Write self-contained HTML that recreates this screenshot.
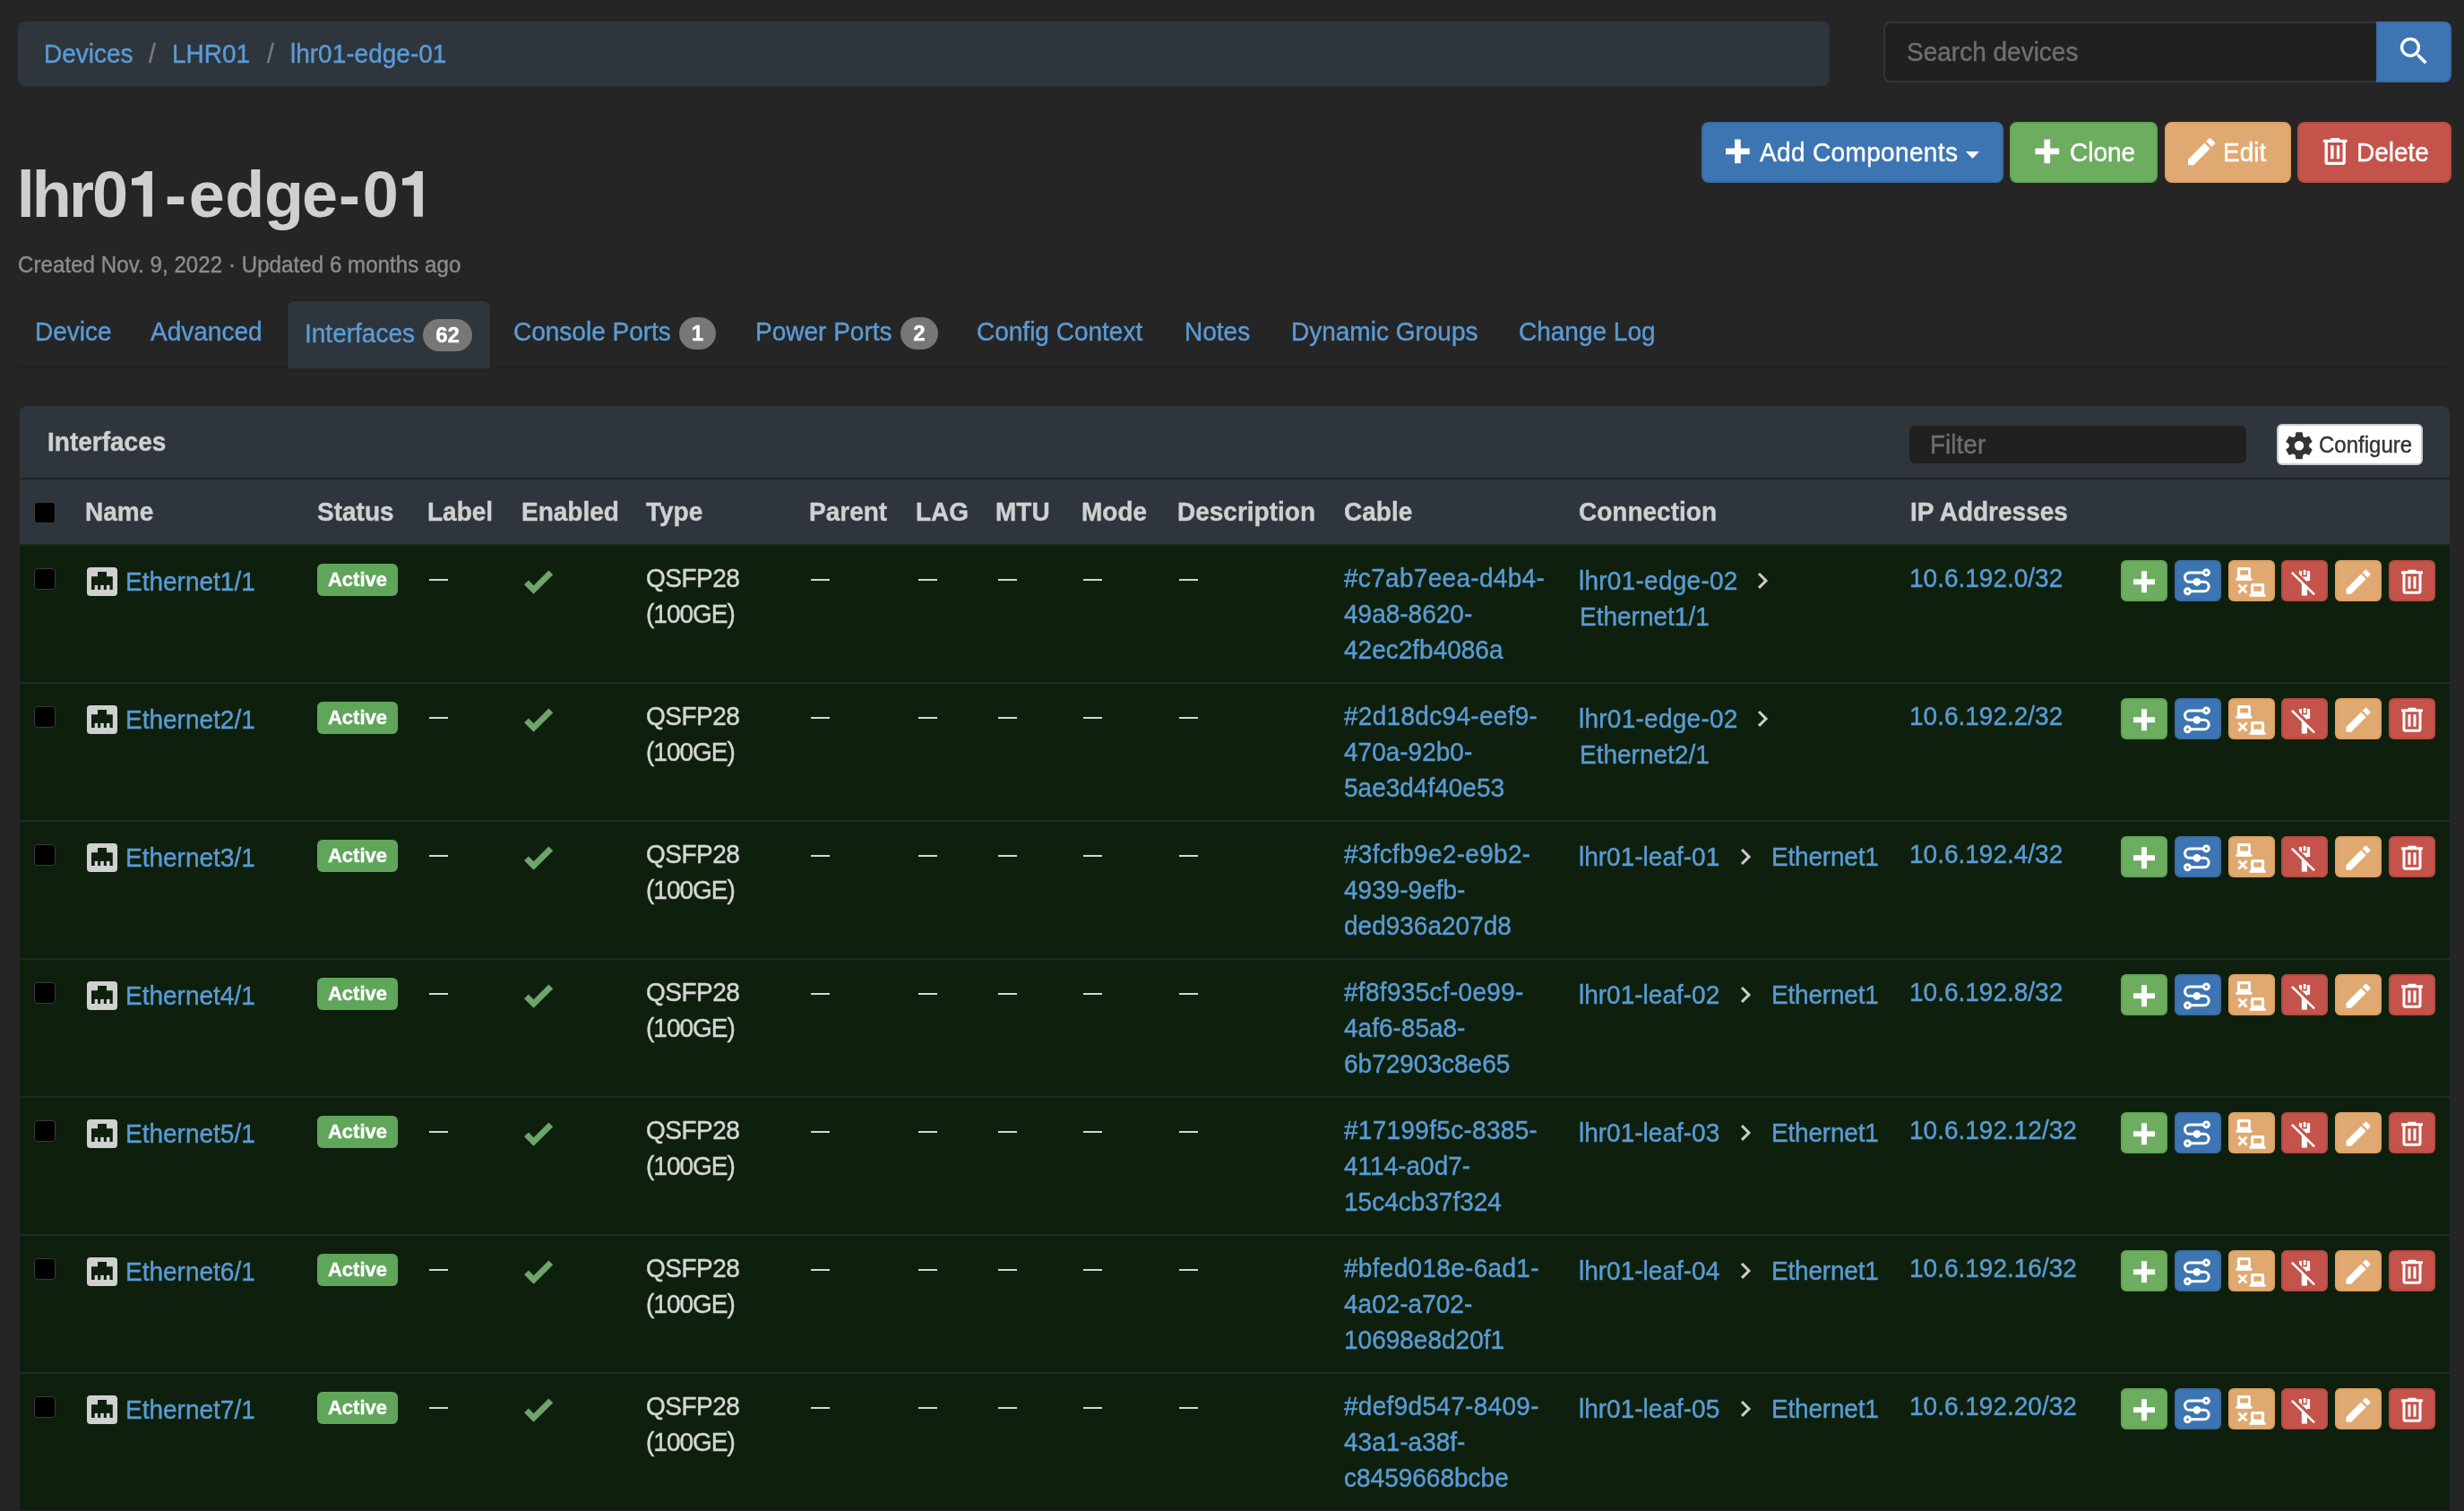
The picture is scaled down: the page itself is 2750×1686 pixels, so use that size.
<!DOCTYPE html>
<html><head><meta charset="utf-8"><style>
html,body{margin:0;padding:0;}
body{width:2750px;height:1686px;overflow:hidden;background:#252525;position:relative;font-family:'Liberation Sans', sans-serif;}
.t{position:absolute;white-space:nowrap;-webkit-text-stroke:0.4px currentColor;}
.r{position:absolute;}
#root{position:absolute;left:0;top:0;width:2750px;height:1686px;will-change:transform;}
</style></head><body><div id="root">
<div class="r" style="left:20px;top:24px;width:2022px;height:72px;background:#2e353d;border-radius:8px;"></div>
<div class="t" style="left:49px;top:41px;font-size:28px;line-height:40px;color:#5b9bd5;transform:scaleY(1.045);transform-origin:0 29px;">Devices</div>
<div class="t" style="left:166px;top:41px;font-size:28px;line-height:40px;color:#7a7a7a;transform:scaleY(1.045);transform-origin:0 29px;">/</div>
<div class="t" style="left:192px;top:41px;font-size:28px;line-height:40px;color:#5b9bd5;transform:scaleY(1.045);transform-origin:0 29px;">LHR01</div>
<div class="t" style="left:298px;top:41px;font-size:28px;line-height:40px;color:#7a7a7a;transform:scaleY(1.045);transform-origin:0 29px;">/</div>
<div class="t" style="left:324px;top:41px;font-size:28px;line-height:40px;color:#5b9bd5;transform:scaleY(1.045);transform-origin:0 29px;">lhr01-edge-01</div>
<div class="r" style="left:2102px;top:24px;width:550px;height:68px;background:#202020;border-radius:8px 0 0 8px;box-sizing:border-box;border:2px solid #353535;border-right:none;"></div>
<div class="t" style="left:2128px;top:39px;font-size:28px;line-height:40px;color:#6f6f6f;transform:scaleY(1.045);transform-origin:0 29px;">Search devices</div>
<div class="r" style="left:2652px;top:24px;width:84px;height:68px;background:#3d75b2;border-radius:0 8px 8px 0;box-sizing:border-box;border:2px solid #3a6ca5;"></div>
<svg class="r" style="left:0;top:0;transform:translate(2673.85px,36.65px)" width="40.8" height="40.8" viewBox="0 0 24 24"><path d="M9.5,3A6.5,6.5 0 0,1 16,9.5C16,11.11 15.41,12.59 14.44,13.73L14.71,14H15.5L20.5,19L19,20.5L14,15.5V14.71L13.73,14.44C12.59,15.41 11.11,16 9.5,16A6.5,6.5 0 0,1 3,9.5A6.5,6.5 0 0,1 9.5,3M9.5,5C7,5 5,7 5,9.5C5,12 7,14 9.5,14C12,14 14,12 14,9.5C14,7 12,5 9.5,5Z" fill="#fff"/></svg>
<div class="r" style="left:1899px;top:136px;width:337px;height:68px;background:#3d75b2;border-radius:8px;box-sizing:border-box;border:2px solid #3a6ca5;"></div>
<svg class="r" style="left:0;top:0;transform:translate(1919.4px,148.8px)" width="40" height="40" viewBox="0 0 24 24"><path d="M20 14H14V20H10V14H4V10H10V4H14V10H20V14Z" fill="#fff"/></svg>
<svg class="r" style="left:1899px;top:136px;" width="337" height="68" viewBox="0 0 337 68"><path d="M295 33h15l-7.5 8z" fill="#fff"/></svg>
<div class="t" style="left:1964px;top:151px;font-size:28px;line-height:40px;color:#fff;letter-spacing:0.35px;transform:scaleY(1.045);transform-origin:0 29px;">Add Components</div>
<div class="r" style="left:2243px;top:136px;width:165px;height:68px;background:#6dad60;border-radius:8px;box-sizing:border-box;border:2px solid #62a653;"></div>
<svg class="r" style="left:0;top:0;transform:translate(2264.8px,148.8px)" width="40" height="40" viewBox="0 0 24 24"><path d="M20 14H14V20H10V14H4V10H10V4H14V10H20V14Z" fill="#fff"/></svg>
<div class="t" style="left:2310px;top:151px;font-size:28px;line-height:40px;color:#fff;transform:scaleY(1.045);transform-origin:0 29px;">Clone</div>
<div class="r" style="left:2416px;top:136px;width:141px;height:68px;background:#e0a971;border-radius:8px;box-sizing:border-box;border:2px solid #e0a160;"></div>
<svg class="r" style="left:0;top:0;transform:translate(2437px,149.2px)" width="40" height="40" viewBox="0 0 24 24"><path d="M20.71,7.04C21.1,6.65 21.1,6 20.71,5.63L18.37,3.29C18,2.9 17.35,2.9 16.96,3.29L15.12,5.12L18.87,8.87M3,17.25V21H6.75L17.81,9.93L14.06,6.18L3,17.25Z" fill="#fff"/></svg>
<div class="t" style="left:2481px;top:151px;font-size:28px;line-height:40px;color:#fff;transform:scaleY(1.045);transform-origin:0 29px;">Edit</div>
<div class="r" style="left:2564px;top:136px;width:172px;height:68px;background:#c4544b;border-radius:8px;box-sizing:border-box;border:2px solid #ba4a42;"></div>
<svg class="r" style="left:0;top:0;transform:translate(2586.2px,149px)" width="40" height="40" viewBox="0 0 24 24"><path d="M9,3V4H4V6H5V19A2,2 0 0,0 7,21H17A2,2 0 0,0 19,19V6H20V4H15V3H9M7,6H17V19H7V6M9,8V17H11V8H9M13,8V17H15V8H13Z" fill="#fff"/></svg>
<div class="t" style="left:2630px;top:151px;font-size:28px;line-height:40px;color:#fff;transform:scaleY(1.045);transform-origin:0 29px;">Delete</div>
<div class="t" style="left:18.8px;top:177px;font-size:72px;line-height:80px;color:#cfcfcf;font-weight:bold;-webkit-text-stroke:0;">l</div>
<div class="t" style="left:35.8px;top:177px;font-size:72px;line-height:80px;color:#cfcfcf;font-weight:bold;-webkit-text-stroke:0;">h</div>
<div class="t" style="left:76.9px;top:177px;font-size:72px;line-height:80px;color:#cfcfcf;font-weight:bold;-webkit-text-stroke:0;">r</div>
<div class="t" style="left:103px;top:177px;font-size:72px;line-height:80px;color:#cfcfcf;font-weight:bold;-webkit-text-stroke:0;">0</div>
<div class="t" style="left:183.9px;top:177px;font-size:72px;line-height:80px;color:#cfcfcf;font-weight:bold;-webkit-text-stroke:0;">-</div>
<div class="t" style="left:210.7px;top:177px;font-size:72px;line-height:80px;color:#cfcfcf;font-weight:bold;-webkit-text-stroke:0;">e</div>
<div class="t" style="left:251.3px;top:177px;font-size:72px;line-height:80px;color:#cfcfcf;font-weight:bold;-webkit-text-stroke:0;">d</div>
<div class="t" style="left:295px;top:177px;font-size:72px;line-height:80px;color:#cfcfcf;font-weight:bold;-webkit-text-stroke:0;">g</div>
<div class="t" style="left:337px;top:177px;font-size:72px;line-height:80px;color:#cfcfcf;font-weight:bold;-webkit-text-stroke:0;">e</div>
<div class="t" style="left:377.9px;top:177px;font-size:72px;line-height:80px;color:#cfcfcf;font-weight:bold;-webkit-text-stroke:0;">-</div>
<div class="t" style="left:404.7px;top:177px;font-size:72px;line-height:80px;color:#cfcfcf;font-weight:bold;-webkit-text-stroke:0;">0</div>
<svg class="r" style="left:0px;top:0" width="500" height="260" viewBox="0 0 500 260"><path d="M147 199C153 198.5 159 196 161.5 190.9H169.9V241.8H159.8V206.8H147Z" fill="#cfcfcf"/></svg>
<svg class="r" style="left:302px;top:0" width="500" height="260" viewBox="0 0 500 260"><path d="M147 199C153 198.5 159 196 161.5 190.9H169.9V241.8H159.8V206.8H147Z" fill="#cfcfcf"/></svg>
<div class="t" style="left:20px;top:276px;font-size:24px;line-height:40px;color:#8c8c8c;letter-spacing:0.09px;transform:scaleY(1.045);transform-origin:0 28px;">Created Nov. 9, 2022 · Updated 6 months ago</div>
<div class="r" style="left:20px;top:409px;width:2714px;height:2px;background:#212121;"></div>
<div class="r" style="left:320px;top:335px;width:228px;height:76px;background:#2e353d;border-radius:8px 8px 0 0;box-sizing:border-box;border:1px solid #212121;border-bottom:none;"></div>
<div class="t" style="left:39px;top:351px;font-size:28px;line-height:40px;color:#5b9bd5;transform:scaleY(1.045);transform-origin:0 29px;">Device</div>
<div class="t" style="left:168px;top:351px;font-size:28px;line-height:40px;color:#5b9bd5;transform:scaleY(1.045);transform-origin:0 29px;">Advanced</div>
<div class="t" style="left:340px;top:353px;font-size:28px;line-height:40px;color:#5b9bd5;transform:scaleY(1.045);transform-origin:0 29px;">Interfaces</div>
<div class="r" style="left:472px;top:356px;width:55px;height:36px;background:#777777;border-radius:18px;"></div>
<div class="t" style="left:472px;top:356px;width:55px;height:36px;line-height:36px;text-align:center;font-size:24px;font-weight:bold;color:#fff">62</div>
<div class="t" style="left:573px;top:351px;font-size:28px;line-height:40px;color:#5b9bd5;transform:scaleY(1.045);transform-origin:0 29px;">Console Ports</div>
<div class="r" style="left:758px;top:354px;width:41px;height:36px;background:#777777;border-radius:18px;"></div>
<div class="t" style="left:758px;top:354px;width:41px;height:36px;line-height:36px;text-align:center;font-size:24px;font-weight:bold;color:#fff">1</div>
<div class="t" style="left:843px;top:351px;font-size:28px;line-height:40px;color:#5b9bd5;transform:scaleY(1.045);transform-origin:0 29px;">Power Ports</div>
<div class="r" style="left:1005px;top:354px;width:42px;height:36px;background:#777777;border-radius:18px;"></div>
<div class="t" style="left:1005px;top:354px;width:42px;height:36px;line-height:36px;text-align:center;font-size:24px;font-weight:bold;color:#fff">2</div>
<div class="t" style="left:1090px;top:351px;font-size:28px;line-height:40px;color:#5b9bd5;transform:scaleY(1.045);transform-origin:0 29px;">Config Context</div>
<div class="t" style="left:1322px;top:351px;font-size:28px;line-height:40px;color:#5b9bd5;transform:scaleY(1.045);transform-origin:0 29px;">Notes</div>
<div class="t" style="left:1441px;top:351px;font-size:28px;line-height:40px;color:#5b9bd5;transform:scaleY(1.045);transform-origin:0 29px;">Dynamic Groups</div>
<div class="t" style="left:1695px;top:351px;font-size:28px;line-height:40px;color:#5b9bd5;transform:scaleY(1.045);transform-origin:0 29px;">Change Log</div>
<div class="r" style="left:22px;top:453px;width:2712px;height:80px;background:#2e353d;border-radius:8px 8px 0 0;"></div>
<div class="r" style="left:22px;top:533px;width:2712px;height:2px;background:#232323;"></div>
<div class="r" style="left:22px;top:535px;width:2712px;height:72px;background:#2e353d;"></div>
<div class="r" style="left:22px;top:607px;width:2712px;height:2px;background:#232323;"></div>
<div class="t" style="left:53px;top:474px;font-size:28px;line-height:40px;color:#d0d0d0;font-weight:bold;transform:scaleY(1.045);transform-origin:0 29px;">Interfaces</div>
<div class="r" style="left:2129px;top:473px;width:380px;height:46px;background:#202020;border-radius:8px;box-sizing:border-box;border:2px solid #353535;"></div>
<div class="t" style="left:2154px;top:477px;font-size:28px;line-height:40px;color:#6f6f6f;transform:scaleY(1.045);transform-origin:0 29px;">Filter</div>
<div class="r" style="left:2541px;top:473px;width:163px;height:46px;background:#fff;border-radius:6px;box-sizing:border-box;border:2px solid #cccccc;"></div>
<svg class="r" style="left:0;top:0;transform:translate(2548px,479.3px)" width="36" height="36" viewBox="0 0 24 24"><path d="M12,15.5A3.5,3.5 0 0,1 8.5,12A3.5,3.5 0 0,1 12,8.5A3.5,3.5 0 0,1 15.5,12A3.5,3.5 0 0,1 12,15.5M19.43,12.97C19.47,12.65 19.5,12.33 19.5,12C19.5,11.67 19.47,11.34 19.43,11L21.54,9.37C21.73,9.22 21.78,8.95 21.66,8.73L19.66,5.27C19.54,5.05 19.27,4.96 19.05,5.05L16.56,6.05C16.04,5.66 15.5,5.32 14.87,5.07L14.5,2.42C14.46,2.18 14.25,2 14,2H10C9.75,2 9.54,2.18 9.5,2.42L9.13,5.07C8.5,5.32 7.96,5.66 7.44,6.05L4.95,5.05C4.73,4.96 4.46,5.05 4.34,5.27L2.34,8.73C2.21,8.95 2.27,9.22 2.46,9.37L4.57,11C4.53,11.34 4.5,11.67 4.5,12C4.5,12.33 4.53,12.65 4.57,12.97L2.46,14.63C2.27,14.78 2.21,15.05 2.34,15.27L4.34,18.73C4.46,18.95 4.73,19.03 4.95,18.95L7.44,17.94C7.96,18.34 8.5,18.68 9.13,18.93L9.5,21.58C9.54,21.82 9.75,22 10,22H14C14.25,22 14.46,21.82 14.5,21.58L14.87,18.93C15.5,18.67 16.04,18.34 16.56,17.94L19.05,18.95C19.27,19.03 19.54,18.95 19.66,18.73L21.66,15.27C21.78,15.05 21.73,14.78 21.54,14.63L19.43,12.97Z" fill="#333"/></svg>
<div class="t" style="left:2588px;top:477px;font-size:24px;line-height:40px;color:#333333;transform:scaleY(1.045);transform-origin:0 28px;">Configure</div>
<div class="r" style="left:38px;top:560px;width:24px;height:24px;background:#000;border-radius:4px;box-sizing:border-box;border:1px solid #3b3b3b;"></div>
<div class="t" style="left:95px;top:552px;font-size:28px;line-height:40px;color:#d0d0d0;font-weight:bold;transform:scaleY(1.045);transform-origin:0 29px;">Name</div>
<div class="t" style="left:354px;top:552px;font-size:28px;line-height:40px;color:#d0d0d0;font-weight:bold;transform:scaleY(1.045);transform-origin:0 29px;">Status</div>
<div class="t" style="left:477px;top:552px;font-size:28px;line-height:40px;color:#d0d0d0;font-weight:bold;transform:scaleY(1.045);transform-origin:0 29px;">Label</div>
<div class="t" style="left:582px;top:552px;font-size:28px;line-height:40px;color:#d0d0d0;font-weight:bold;transform:scaleY(1.045);transform-origin:0 29px;">Enabled</div>
<div class="t" style="left:721px;top:552px;font-size:28px;line-height:40px;color:#d0d0d0;font-weight:bold;transform:scaleY(1.045);transform-origin:0 29px;">Type</div>
<div class="t" style="left:903px;top:552px;font-size:28px;line-height:40px;color:#d0d0d0;font-weight:bold;transform:scaleY(1.045);transform-origin:0 29px;">Parent</div>
<div class="t" style="left:1022px;top:552px;font-size:28px;line-height:40px;color:#d0d0d0;font-weight:bold;transform:scaleY(1.045);transform-origin:0 29px;">LAG</div>
<div class="t" style="left:1111px;top:552px;font-size:28px;line-height:40px;color:#d0d0d0;font-weight:bold;transform:scaleY(1.045);transform-origin:0 29px;">MTU</div>
<div class="t" style="left:1207px;top:552px;font-size:28px;line-height:40px;color:#d0d0d0;font-weight:bold;transform:scaleY(1.045);transform-origin:0 29px;">Mode</div>
<div class="t" style="left:1314px;top:552px;font-size:28px;line-height:40px;color:#d0d0d0;font-weight:bold;transform:scaleY(1.045);transform-origin:0 29px;">Description</div>
<div class="t" style="left:1500px;top:552px;font-size:28px;line-height:40px;color:#d0d0d0;font-weight:bold;transform:scaleY(1.045);transform-origin:0 29px;">Cable</div>
<div class="t" style="left:1762px;top:552px;font-size:28px;line-height:40px;color:#d0d0d0;font-weight:bold;transform:scaleY(1.045);transform-origin:0 29px;">Connection</div>
<div class="t" style="left:2132px;top:552px;font-size:28px;line-height:40px;color:#d0d0d0;font-weight:bold;transform:scaleY(1.045);transform-origin:0 29px;">IP Addresses</div>
<div class="r" style="left:22px;top:609px;width:2712px;height:152px;background:#0e200d;"></div>
<div class="r" style="left:38px;top:634px;width:24px;height:24px;background:#000;border-radius:4px;box-sizing:border-box;border:1px solid #3b3b3b;"></div>
<svg class="r" style="left:97px;top:633px;" width="34" height="32" viewBox="0 0 34 32"><rect x="0" y="0" width="34" height="32" rx="4" fill="#d0d0d0"/><path d="M5 10.2H12V5.1H22V10.2H28.8V25H5Z" fill="#0e200d"/><rect x="8.7" y="19.9" width="3.4" height="5.2" fill="#d0d0d0"/><rect x="15.2" y="19.9" width="3.6" height="5.2" fill="#d0d0d0"/><rect x="21.9" y="19.9" width="3.6" height="5.2" fill="#d0d0d0"/></svg>
<div class="t" style="left:140px;top:630px;font-size:28px;line-height:40px;color:#5b9bd5;transform:scaleY(1.045);transform-origin:0 29px;">Ethernet1/1</div>
<div class="r" style="left:354px;top:629px;width:90px;height:36px;background:#5fa55a;border-radius:6px;"></div>
<div class="t" style="left:354px;top:629px;width:90px;text-align:center;font-size:22px;line-height:36px;font-weight:bold;color:#fff">Active</div>
<div class="r" style="left:479px;top:646px;width:21px;height:2px;background:#d6d6d6;"></div>
<svg class="r" style="left:0;top:0;transform:translate(580.3px,628.1px)" width="40.8" height="40.8" viewBox="0 0 24 24"><path d="M9,20.42L2.79,14.21L5.62,11.38L9,14.77L18.88,4.88L21.71,7.71L9,20.42Z" fill="#6ea56a"/></svg>
<div class="t" style="left:721px;top:626px;font-size:28px;line-height:40px;color:#d6d6d6;letter-spacing:-0.5px;transform:scaleY(1.045);transform-origin:0 29px;">QSFP28</div>
<div class="t" style="left:721px;top:666px;font-size:28px;line-height:40px;color:#d6d6d6;letter-spacing:-1.0px;transform:scaleY(1.045);transform-origin:0 29px;">(100GE)</div>
<div class="r" style="left:905px;top:646px;width:21px;height:2px;background:#d6d6d6;"></div>
<div class="r" style="left:1025px;top:646px;width:21px;height:2px;background:#d6d6d6;"></div>
<div class="r" style="left:1114px;top:646px;width:21px;height:2px;background:#d6d6d6;"></div>
<div class="r" style="left:1209px;top:646px;width:21px;height:2px;background:#d6d6d6;"></div>
<div class="r" style="left:1316px;top:646px;width:21px;height:2px;background:#d6d6d6;"></div>
<div class="t" style="left:1500px;top:626px;font-size:28px;line-height:40px;color:#5b9bd5;letter-spacing:0.3px;transform:scaleY(1.045);transform-origin:0 29px;">#c7ab7eea-d4b4-</div>
<div class="t" style="left:1500px;top:666px;font-size:28px;line-height:40px;color:#5b9bd5;transform:scaleY(1.045);transform-origin:0 29px;">49a8-8620-</div>
<div class="t" style="left:1500px;top:706px;font-size:28px;line-height:40px;color:#5b9bd5;transform:scaleY(1.045);transform-origin:0 29px;">42ec2fb4086a</div>
<div class="t" style="left:1762px;top:629px;font-size:28px;line-height:40px;color:#5b9bd5;letter-spacing:0.25px;transform:scaleY(1.045);transform-origin:0 29px;">lhr01-edge-02</div>
<svg class="r" style="left:0;top:0;transform:translate(1949.1px,630px)" width="36" height="36" viewBox="0 0 24 24"><path d="M8.59,16.58L13.17,12L8.59,7.41L10,6L16,12L10,18L8.59,16.58Z" fill="#cccccc"/></svg>
<div class="t" style="left:1763px;top:669px;font-size:28px;line-height:40px;color:#5b9bd5;transform:scaleY(1.045);transform-origin:0 29px;">Ethernet1/1</div>
<div class="t" style="left:2131px;top:626px;font-size:28px;line-height:40px;color:#5b9bd5;transform:scaleY(1.045);transform-origin:0 29px;">10.6.192.0/32</div>
<div class="r" style="left:2367px;top:625px;width:52px;height:46px;background:#6dad60;border-radius:6px;box-sizing:border-box;border:2px solid #62a653;"></div>
<svg class="r" style="left:2367px;top:625px;" width="52" height="46" viewBox="0 0 52 46"><g transform="translate(8 6.3) scale(1.5)"><path d="M20 14H14V20H10V14H4V10H10V4H14V10H20V14Z" fill="#fff"/></g></svg>
<div class="r" style="left:2427px;top:625px;width:52px;height:46px;background:#3d75b2;border-radius:6px;box-sizing:border-box;border:2px solid #3a6ca5;"></div>
<svg class="r" style="left:2427px;top:625px;" width="52" height="46" viewBox="0 0 52 46"><path d="M32.5 13.95H16.74A5.2 5.2 0 0 0 16.74 24.35H32.98A5.2 5.2 0 0 1 32.98 34.75H17.5" fill="none" stroke="#fff" stroke-width="3"/><circle cx="35.4" cy="13.95" r="2.9" fill="none" stroke="#fff" stroke-width="3.1"/><circle cx="14.46" cy="34.75" r="2.9" fill="none" stroke="#fff" stroke-width="3.1"/><circle cx="24.86" cy="24.35" r="4.3" fill="#fff"/></svg>
<div class="r" style="left:2487px;top:625px;width:52px;height:46px;background:#e0a971;border-radius:6px;box-sizing:border-box;border:2px solid #e0a160;"></div>
<svg class="r" style="left:2487px;top:625px;" width="52" height="46" viewBox="0 0 52 46"><path d="M12 7.9H22.8A2.1 2.1 0 0 1 24.9 10V20H9.9V10A2.1 2.1 0 0 1 12 7.9ZM13.2 11.2V16.5H22.1V11.2Z" fill="#fff" fill-rule="evenodd"/><rect x="8.4" y="20" width="18" height="2.8" fill="#fff"/><path d="M27.2 26H38A2.1 2.1 0 0 1 40.1 28.1V38H25.1V28.1A2.1 2.1 0 0 1 27.2 26ZM28.3 29.2V34.75H37V29.2Z" fill="#fff" fill-rule="evenodd"/><rect x="23.6" y="38" width="18" height="2.8" fill="#fff"/><path d="M11.5 27.5L20.5 36.5M20.5 27.5L11.5 36.5" stroke="#fff" stroke-width="2.8"/></svg>
<div class="r" style="left:2546px;top:625px;width:52px;height:46px;background:#c4544b;border-radius:6px;box-sizing:border-box;border:2px solid #ba4a42;"></div>
<svg class="r" style="left:2546px;top:625px;" width="52" height="46" viewBox="0 0 52 46"><path d="M19.9 11.9H23.1V18.6H28.8V11.9H32.1V23H19.9Z" fill="#fff"/><rect x="24.8" y="11" width="2.7" height="5.6" fill="#fff"/><rect x="22.8" y="22" width="6.1" height="17.6" fill="#fff"/><path d="M5 7.12L45 46.16L48.07 43.01L8.07 3.97Z" fill="#c4544b"/><path d="M11.9 13.85L37.0 38.4" stroke="#fff" stroke-width="2.5"/></svg>
<div class="r" style="left:2606px;top:625px;width:52px;height:46px;background:#e0a971;border-radius:6px;box-sizing:border-box;border:2px solid #e0a160;"></div>
<svg class="r" style="left:2606px;top:625px;" width="52" height="46" viewBox="0 0 52 46"><g transform="translate(8 6.3) scale(1.5)"><path d="M20.71,7.04C21.1,6.65 21.1,6 20.71,5.63L18.37,3.29C18,2.9 17.35,2.9 16.96,3.29L15.12,5.12L18.87,8.87M3,17.25V21H6.75L17.81,9.93L14.06,6.18L3,17.25Z" fill="#fff"/></g></svg>
<div class="r" style="left:2666px;top:625px;width:52px;height:46px;background:#c4544b;border-radius:6px;box-sizing:border-box;border:2px solid #ba4a42;"></div>
<svg class="r" style="left:2666px;top:625px;" width="52" height="46" viewBox="0 0 52 46"><g transform="translate(8 6.3) scale(1.5)"><path d="M9,3V4H4V6H5V19A2,2 0 0,0 7,21H17A2,2 0 0,0 19,19V6H20V4H15V3H9M7,6H17V19H7V6M9,8V17H11V8H9M13,8V17H15V8H13Z" fill="#fff"/></g></svg>
<div class="r" style="left:22px;top:761px;width:2712px;height:2px;background:#28272a;"></div>
<div class="r" style="left:22px;top:763px;width:2712px;height:152px;background:#0e200d;"></div>
<div class="r" style="left:38px;top:788px;width:24px;height:24px;background:#000;border-radius:4px;box-sizing:border-box;border:1px solid #3b3b3b;"></div>
<svg class="r" style="left:97px;top:787px;" width="34" height="32" viewBox="0 0 34 32"><rect x="0" y="0" width="34" height="32" rx="4" fill="#d0d0d0"/><path d="M5 10.2H12V5.1H22V10.2H28.8V25H5Z" fill="#0e200d"/><rect x="8.7" y="19.9" width="3.4" height="5.2" fill="#d0d0d0"/><rect x="15.2" y="19.9" width="3.6" height="5.2" fill="#d0d0d0"/><rect x="21.9" y="19.9" width="3.6" height="5.2" fill="#d0d0d0"/></svg>
<div class="t" style="left:140px;top:784px;font-size:28px;line-height:40px;color:#5b9bd5;transform:scaleY(1.045);transform-origin:0 29px;">Ethernet2/1</div>
<div class="r" style="left:354px;top:783px;width:90px;height:36px;background:#5fa55a;border-radius:6px;"></div>
<div class="t" style="left:354px;top:783px;width:90px;text-align:center;font-size:22px;line-height:36px;font-weight:bold;color:#fff">Active</div>
<div class="r" style="left:479px;top:800px;width:21px;height:2px;background:#d6d6d6;"></div>
<svg class="r" style="left:0;top:0;transform:translate(580.3px,782.1px)" width="40.8" height="40.8" viewBox="0 0 24 24"><path d="M9,20.42L2.79,14.21L5.62,11.38L9,14.77L18.88,4.88L21.71,7.71L9,20.42Z" fill="#6ea56a"/></svg>
<div class="t" style="left:721px;top:780px;font-size:28px;line-height:40px;color:#d6d6d6;letter-spacing:-0.5px;transform:scaleY(1.045);transform-origin:0 29px;">QSFP28</div>
<div class="t" style="left:721px;top:820px;font-size:28px;line-height:40px;color:#d6d6d6;letter-spacing:-1.0px;transform:scaleY(1.045);transform-origin:0 29px;">(100GE)</div>
<div class="r" style="left:905px;top:800px;width:21px;height:2px;background:#d6d6d6;"></div>
<div class="r" style="left:1025px;top:800px;width:21px;height:2px;background:#d6d6d6;"></div>
<div class="r" style="left:1114px;top:800px;width:21px;height:2px;background:#d6d6d6;"></div>
<div class="r" style="left:1209px;top:800px;width:21px;height:2px;background:#d6d6d6;"></div>
<div class="r" style="left:1316px;top:800px;width:21px;height:2px;background:#d6d6d6;"></div>
<div class="t" style="left:1500px;top:780px;font-size:28px;line-height:40px;color:#5b9bd5;letter-spacing:0.3px;transform:scaleY(1.045);transform-origin:0 29px;">#2d18dc94-eef9-</div>
<div class="t" style="left:1500px;top:820px;font-size:28px;line-height:40px;color:#5b9bd5;transform:scaleY(1.045);transform-origin:0 29px;">470a-92b0-</div>
<div class="t" style="left:1500px;top:860px;font-size:28px;line-height:40px;color:#5b9bd5;transform:scaleY(1.045);transform-origin:0 29px;">5ae3d4f40e53</div>
<div class="t" style="left:1762px;top:783px;font-size:28px;line-height:40px;color:#5b9bd5;letter-spacing:0.25px;transform:scaleY(1.045);transform-origin:0 29px;">lhr01-edge-02</div>
<svg class="r" style="left:0;top:0;transform:translate(1949.1px,784px)" width="36" height="36" viewBox="0 0 24 24"><path d="M8.59,16.58L13.17,12L8.59,7.41L10,6L16,12L10,18L8.59,16.58Z" fill="#cccccc"/></svg>
<div class="t" style="left:1763px;top:823px;font-size:28px;line-height:40px;color:#5b9bd5;transform:scaleY(1.045);transform-origin:0 29px;">Ethernet2/1</div>
<div class="t" style="left:2131px;top:780px;font-size:28px;line-height:40px;color:#5b9bd5;transform:scaleY(1.045);transform-origin:0 29px;">10.6.192.2/32</div>
<div class="r" style="left:2367px;top:779px;width:52px;height:46px;background:#6dad60;border-radius:6px;box-sizing:border-box;border:2px solid #62a653;"></div>
<svg class="r" style="left:2367px;top:779px;" width="52" height="46" viewBox="0 0 52 46"><g transform="translate(8 6.3) scale(1.5)"><path d="M20 14H14V20H10V14H4V10H10V4H14V10H20V14Z" fill="#fff"/></g></svg>
<div class="r" style="left:2427px;top:779px;width:52px;height:46px;background:#3d75b2;border-radius:6px;box-sizing:border-box;border:2px solid #3a6ca5;"></div>
<svg class="r" style="left:2427px;top:779px;" width="52" height="46" viewBox="0 0 52 46"><path d="M32.5 13.95H16.74A5.2 5.2 0 0 0 16.74 24.35H32.98A5.2 5.2 0 0 1 32.98 34.75H17.5" fill="none" stroke="#fff" stroke-width="3"/><circle cx="35.4" cy="13.95" r="2.9" fill="none" stroke="#fff" stroke-width="3.1"/><circle cx="14.46" cy="34.75" r="2.9" fill="none" stroke="#fff" stroke-width="3.1"/><circle cx="24.86" cy="24.35" r="4.3" fill="#fff"/></svg>
<div class="r" style="left:2487px;top:779px;width:52px;height:46px;background:#e0a971;border-radius:6px;box-sizing:border-box;border:2px solid #e0a160;"></div>
<svg class="r" style="left:2487px;top:779px;" width="52" height="46" viewBox="0 0 52 46"><path d="M12 7.9H22.8A2.1 2.1 0 0 1 24.9 10V20H9.9V10A2.1 2.1 0 0 1 12 7.9ZM13.2 11.2V16.5H22.1V11.2Z" fill="#fff" fill-rule="evenodd"/><rect x="8.4" y="20" width="18" height="2.8" fill="#fff"/><path d="M27.2 26H38A2.1 2.1 0 0 1 40.1 28.1V38H25.1V28.1A2.1 2.1 0 0 1 27.2 26ZM28.3 29.2V34.75H37V29.2Z" fill="#fff" fill-rule="evenodd"/><rect x="23.6" y="38" width="18" height="2.8" fill="#fff"/><path d="M11.5 27.5L20.5 36.5M20.5 27.5L11.5 36.5" stroke="#fff" stroke-width="2.8"/></svg>
<div class="r" style="left:2546px;top:779px;width:52px;height:46px;background:#c4544b;border-radius:6px;box-sizing:border-box;border:2px solid #ba4a42;"></div>
<svg class="r" style="left:2546px;top:779px;" width="52" height="46" viewBox="0 0 52 46"><path d="M19.9 11.9H23.1V18.6H28.8V11.9H32.1V23H19.9Z" fill="#fff"/><rect x="24.8" y="11" width="2.7" height="5.6" fill="#fff"/><rect x="22.8" y="22" width="6.1" height="17.6" fill="#fff"/><path d="M5 7.12L45 46.16L48.07 43.01L8.07 3.97Z" fill="#c4544b"/><path d="M11.9 13.85L37.0 38.4" stroke="#fff" stroke-width="2.5"/></svg>
<div class="r" style="left:2606px;top:779px;width:52px;height:46px;background:#e0a971;border-radius:6px;box-sizing:border-box;border:2px solid #e0a160;"></div>
<svg class="r" style="left:2606px;top:779px;" width="52" height="46" viewBox="0 0 52 46"><g transform="translate(8 6.3) scale(1.5)"><path d="M20.71,7.04C21.1,6.65 21.1,6 20.71,5.63L18.37,3.29C18,2.9 17.35,2.9 16.96,3.29L15.12,5.12L18.87,8.87M3,17.25V21H6.75L17.81,9.93L14.06,6.18L3,17.25Z" fill="#fff"/></g></svg>
<div class="r" style="left:2666px;top:779px;width:52px;height:46px;background:#c4544b;border-radius:6px;box-sizing:border-box;border:2px solid #ba4a42;"></div>
<svg class="r" style="left:2666px;top:779px;" width="52" height="46" viewBox="0 0 52 46"><g transform="translate(8 6.3) scale(1.5)"><path d="M9,3V4H4V6H5V19A2,2 0 0,0 7,21H17A2,2 0 0,0 19,19V6H20V4H15V3H9M7,6H17V19H7V6M9,8V17H11V8H9M13,8V17H15V8H13Z" fill="#fff"/></g></svg>
<div class="r" style="left:22px;top:915px;width:2712px;height:2px;background:#28272a;"></div>
<div class="r" style="left:22px;top:917px;width:2712px;height:152px;background:#0e200d;"></div>
<div class="r" style="left:38px;top:942px;width:24px;height:24px;background:#000;border-radius:4px;box-sizing:border-box;border:1px solid #3b3b3b;"></div>
<svg class="r" style="left:97px;top:941px;" width="34" height="32" viewBox="0 0 34 32"><rect x="0" y="0" width="34" height="32" rx="4" fill="#d0d0d0"/><path d="M5 10.2H12V5.1H22V10.2H28.8V25H5Z" fill="#0e200d"/><rect x="8.7" y="19.9" width="3.4" height="5.2" fill="#d0d0d0"/><rect x="15.2" y="19.9" width="3.6" height="5.2" fill="#d0d0d0"/><rect x="21.9" y="19.9" width="3.6" height="5.2" fill="#d0d0d0"/></svg>
<div class="t" style="left:140px;top:938px;font-size:28px;line-height:40px;color:#5b9bd5;transform:scaleY(1.045);transform-origin:0 29px;">Ethernet3/1</div>
<div class="r" style="left:354px;top:937px;width:90px;height:36px;background:#5fa55a;border-radius:6px;"></div>
<div class="t" style="left:354px;top:937px;width:90px;text-align:center;font-size:22px;line-height:36px;font-weight:bold;color:#fff">Active</div>
<div class="r" style="left:479px;top:954px;width:21px;height:2px;background:#d6d6d6;"></div>
<svg class="r" style="left:0;top:0;transform:translate(580.3px,936.1px)" width="40.8" height="40.8" viewBox="0 0 24 24"><path d="M9,20.42L2.79,14.21L5.62,11.38L9,14.77L18.88,4.88L21.71,7.71L9,20.42Z" fill="#6ea56a"/></svg>
<div class="t" style="left:721px;top:934px;font-size:28px;line-height:40px;color:#d6d6d6;letter-spacing:-0.5px;transform:scaleY(1.045);transform-origin:0 29px;">QSFP28</div>
<div class="t" style="left:721px;top:974px;font-size:28px;line-height:40px;color:#d6d6d6;letter-spacing:-1.0px;transform:scaleY(1.045);transform-origin:0 29px;">(100GE)</div>
<div class="r" style="left:905px;top:954px;width:21px;height:2px;background:#d6d6d6;"></div>
<div class="r" style="left:1025px;top:954px;width:21px;height:2px;background:#d6d6d6;"></div>
<div class="r" style="left:1114px;top:954px;width:21px;height:2px;background:#d6d6d6;"></div>
<div class="r" style="left:1209px;top:954px;width:21px;height:2px;background:#d6d6d6;"></div>
<div class="r" style="left:1316px;top:954px;width:21px;height:2px;background:#d6d6d6;"></div>
<div class="t" style="left:1500px;top:934px;font-size:28px;line-height:40px;color:#5b9bd5;letter-spacing:0.3px;transform:scaleY(1.045);transform-origin:0 29px;">#3fcfb9e2-e9b2-</div>
<div class="t" style="left:1500px;top:974px;font-size:28px;line-height:40px;color:#5b9bd5;transform:scaleY(1.045);transform-origin:0 29px;">4939-9efb-</div>
<div class="t" style="left:1500px;top:1014px;font-size:28px;line-height:40px;color:#5b9bd5;transform:scaleY(1.045);transform-origin:0 29px;">ded936a207d8</div>
<div class="t" style="left:1762px;top:937px;font-size:28px;line-height:40px;color:#5b9bd5;transform:scaleY(1.045);transform-origin:0 29px;">lhr01-leaf-01</div>
<svg class="r" style="left:0;top:0;transform:translate(1930.1px,938px)" width="36" height="36" viewBox="0 0 24 24"><path d="M8.59,16.58L13.17,12L8.59,7.41L10,6L16,12L10,18L8.59,16.58Z" fill="#cccccc"/></svg>
<div class="t" style="left:1977px;top:937px;font-size:28px;line-height:40px;color:#5b9bd5;letter-spacing:-0.2px;transform:scaleY(1.045);transform-origin:0 29px;">Ethernet1</div>
<div class="t" style="left:2131px;top:934px;font-size:28px;line-height:40px;color:#5b9bd5;transform:scaleY(1.045);transform-origin:0 29px;">10.6.192.4/32</div>
<div class="r" style="left:2367px;top:933px;width:52px;height:46px;background:#6dad60;border-radius:6px;box-sizing:border-box;border:2px solid #62a653;"></div>
<svg class="r" style="left:2367px;top:933px;" width="52" height="46" viewBox="0 0 52 46"><g transform="translate(8 6.3) scale(1.5)"><path d="M20 14H14V20H10V14H4V10H10V4H14V10H20V14Z" fill="#fff"/></g></svg>
<div class="r" style="left:2427px;top:933px;width:52px;height:46px;background:#3d75b2;border-radius:6px;box-sizing:border-box;border:2px solid #3a6ca5;"></div>
<svg class="r" style="left:2427px;top:933px;" width="52" height="46" viewBox="0 0 52 46"><path d="M32.5 13.95H16.74A5.2 5.2 0 0 0 16.74 24.35H32.98A5.2 5.2 0 0 1 32.98 34.75H17.5" fill="none" stroke="#fff" stroke-width="3"/><circle cx="35.4" cy="13.95" r="2.9" fill="none" stroke="#fff" stroke-width="3.1"/><circle cx="14.46" cy="34.75" r="2.9" fill="none" stroke="#fff" stroke-width="3.1"/><circle cx="24.86" cy="24.35" r="4.3" fill="#fff"/></svg>
<div class="r" style="left:2487px;top:933px;width:52px;height:46px;background:#e0a971;border-radius:6px;box-sizing:border-box;border:2px solid #e0a160;"></div>
<svg class="r" style="left:2487px;top:933px;" width="52" height="46" viewBox="0 0 52 46"><path d="M12 7.9H22.8A2.1 2.1 0 0 1 24.9 10V20H9.9V10A2.1 2.1 0 0 1 12 7.9ZM13.2 11.2V16.5H22.1V11.2Z" fill="#fff" fill-rule="evenodd"/><rect x="8.4" y="20" width="18" height="2.8" fill="#fff"/><path d="M27.2 26H38A2.1 2.1 0 0 1 40.1 28.1V38H25.1V28.1A2.1 2.1 0 0 1 27.2 26ZM28.3 29.2V34.75H37V29.2Z" fill="#fff" fill-rule="evenodd"/><rect x="23.6" y="38" width="18" height="2.8" fill="#fff"/><path d="M11.5 27.5L20.5 36.5M20.5 27.5L11.5 36.5" stroke="#fff" stroke-width="2.8"/></svg>
<div class="r" style="left:2546px;top:933px;width:52px;height:46px;background:#c4544b;border-radius:6px;box-sizing:border-box;border:2px solid #ba4a42;"></div>
<svg class="r" style="left:2546px;top:933px;" width="52" height="46" viewBox="0 0 52 46"><path d="M19.9 11.9H23.1V18.6H28.8V11.9H32.1V23H19.9Z" fill="#fff"/><rect x="24.8" y="11" width="2.7" height="5.6" fill="#fff"/><rect x="22.8" y="22" width="6.1" height="17.6" fill="#fff"/><path d="M5 7.12L45 46.16L48.07 43.01L8.07 3.97Z" fill="#c4544b"/><path d="M11.9 13.85L37.0 38.4" stroke="#fff" stroke-width="2.5"/></svg>
<div class="r" style="left:2606px;top:933px;width:52px;height:46px;background:#e0a971;border-radius:6px;box-sizing:border-box;border:2px solid #e0a160;"></div>
<svg class="r" style="left:2606px;top:933px;" width="52" height="46" viewBox="0 0 52 46"><g transform="translate(8 6.3) scale(1.5)"><path d="M20.71,7.04C21.1,6.65 21.1,6 20.71,5.63L18.37,3.29C18,2.9 17.35,2.9 16.96,3.29L15.12,5.12L18.87,8.87M3,17.25V21H6.75L17.81,9.93L14.06,6.18L3,17.25Z" fill="#fff"/></g></svg>
<div class="r" style="left:2666px;top:933px;width:52px;height:46px;background:#c4544b;border-radius:6px;box-sizing:border-box;border:2px solid #ba4a42;"></div>
<svg class="r" style="left:2666px;top:933px;" width="52" height="46" viewBox="0 0 52 46"><g transform="translate(8 6.3) scale(1.5)"><path d="M9,3V4H4V6H5V19A2,2 0 0,0 7,21H17A2,2 0 0,0 19,19V6H20V4H15V3H9M7,6H17V19H7V6M9,8V17H11V8H9M13,8V17H15V8H13Z" fill="#fff"/></g></svg>
<div class="r" style="left:22px;top:1069px;width:2712px;height:2px;background:#28272a;"></div>
<div class="r" style="left:22px;top:1071px;width:2712px;height:152px;background:#0e200d;"></div>
<div class="r" style="left:38px;top:1096px;width:24px;height:24px;background:#000;border-radius:4px;box-sizing:border-box;border:1px solid #3b3b3b;"></div>
<svg class="r" style="left:97px;top:1095px;" width="34" height="32" viewBox="0 0 34 32"><rect x="0" y="0" width="34" height="32" rx="4" fill="#d0d0d0"/><path d="M5 10.2H12V5.1H22V10.2H28.8V25H5Z" fill="#0e200d"/><rect x="8.7" y="19.9" width="3.4" height="5.2" fill="#d0d0d0"/><rect x="15.2" y="19.9" width="3.6" height="5.2" fill="#d0d0d0"/><rect x="21.9" y="19.9" width="3.6" height="5.2" fill="#d0d0d0"/></svg>
<div class="t" style="left:140px;top:1092px;font-size:28px;line-height:40px;color:#5b9bd5;transform:scaleY(1.045);transform-origin:0 29px;">Ethernet4/1</div>
<div class="r" style="left:354px;top:1091px;width:90px;height:36px;background:#5fa55a;border-radius:6px;"></div>
<div class="t" style="left:354px;top:1091px;width:90px;text-align:center;font-size:22px;line-height:36px;font-weight:bold;color:#fff">Active</div>
<div class="r" style="left:479px;top:1108px;width:21px;height:2px;background:#d6d6d6;"></div>
<svg class="r" style="left:0;top:0;transform:translate(580.3px,1090.1px)" width="40.8" height="40.8" viewBox="0 0 24 24"><path d="M9,20.42L2.79,14.21L5.62,11.38L9,14.77L18.88,4.88L21.71,7.71L9,20.42Z" fill="#6ea56a"/></svg>
<div class="t" style="left:721px;top:1088px;font-size:28px;line-height:40px;color:#d6d6d6;letter-spacing:-0.5px;transform:scaleY(1.045);transform-origin:0 29px;">QSFP28</div>
<div class="t" style="left:721px;top:1128px;font-size:28px;line-height:40px;color:#d6d6d6;letter-spacing:-1.0px;transform:scaleY(1.045);transform-origin:0 29px;">(100GE)</div>
<div class="r" style="left:905px;top:1108px;width:21px;height:2px;background:#d6d6d6;"></div>
<div class="r" style="left:1025px;top:1108px;width:21px;height:2px;background:#d6d6d6;"></div>
<div class="r" style="left:1114px;top:1108px;width:21px;height:2px;background:#d6d6d6;"></div>
<div class="r" style="left:1209px;top:1108px;width:21px;height:2px;background:#d6d6d6;"></div>
<div class="r" style="left:1316px;top:1108px;width:21px;height:2px;background:#d6d6d6;"></div>
<div class="t" style="left:1500px;top:1088px;font-size:28px;line-height:40px;color:#5b9bd5;letter-spacing:0.3px;transform:scaleY(1.045);transform-origin:0 29px;">#f8f935cf-0e99-</div>
<div class="t" style="left:1500px;top:1128px;font-size:28px;line-height:40px;color:#5b9bd5;transform:scaleY(1.045);transform-origin:0 29px;">4af6-85a8-</div>
<div class="t" style="left:1500px;top:1168px;font-size:28px;line-height:40px;color:#5b9bd5;transform:scaleY(1.045);transform-origin:0 29px;">6b72903c8e65</div>
<div class="t" style="left:1762px;top:1091px;font-size:28px;line-height:40px;color:#5b9bd5;transform:scaleY(1.045);transform-origin:0 29px;">lhr01-leaf-02</div>
<svg class="r" style="left:0;top:0;transform:translate(1930.1px,1092px)" width="36" height="36" viewBox="0 0 24 24"><path d="M8.59,16.58L13.17,12L8.59,7.41L10,6L16,12L10,18L8.59,16.58Z" fill="#cccccc"/></svg>
<div class="t" style="left:1977px;top:1091px;font-size:28px;line-height:40px;color:#5b9bd5;letter-spacing:-0.2px;transform:scaleY(1.045);transform-origin:0 29px;">Ethernet1</div>
<div class="t" style="left:2131px;top:1088px;font-size:28px;line-height:40px;color:#5b9bd5;transform:scaleY(1.045);transform-origin:0 29px;">10.6.192.8/32</div>
<div class="r" style="left:2367px;top:1087px;width:52px;height:46px;background:#6dad60;border-radius:6px;box-sizing:border-box;border:2px solid #62a653;"></div>
<svg class="r" style="left:2367px;top:1087px;" width="52" height="46" viewBox="0 0 52 46"><g transform="translate(8 6.3) scale(1.5)"><path d="M20 14H14V20H10V14H4V10H10V4H14V10H20V14Z" fill="#fff"/></g></svg>
<div class="r" style="left:2427px;top:1087px;width:52px;height:46px;background:#3d75b2;border-radius:6px;box-sizing:border-box;border:2px solid #3a6ca5;"></div>
<svg class="r" style="left:2427px;top:1087px;" width="52" height="46" viewBox="0 0 52 46"><path d="M32.5 13.95H16.74A5.2 5.2 0 0 0 16.74 24.35H32.98A5.2 5.2 0 0 1 32.98 34.75H17.5" fill="none" stroke="#fff" stroke-width="3"/><circle cx="35.4" cy="13.95" r="2.9" fill="none" stroke="#fff" stroke-width="3.1"/><circle cx="14.46" cy="34.75" r="2.9" fill="none" stroke="#fff" stroke-width="3.1"/><circle cx="24.86" cy="24.35" r="4.3" fill="#fff"/></svg>
<div class="r" style="left:2487px;top:1087px;width:52px;height:46px;background:#e0a971;border-radius:6px;box-sizing:border-box;border:2px solid #e0a160;"></div>
<svg class="r" style="left:2487px;top:1087px;" width="52" height="46" viewBox="0 0 52 46"><path d="M12 7.9H22.8A2.1 2.1 0 0 1 24.9 10V20H9.9V10A2.1 2.1 0 0 1 12 7.9ZM13.2 11.2V16.5H22.1V11.2Z" fill="#fff" fill-rule="evenodd"/><rect x="8.4" y="20" width="18" height="2.8" fill="#fff"/><path d="M27.2 26H38A2.1 2.1 0 0 1 40.1 28.1V38H25.1V28.1A2.1 2.1 0 0 1 27.2 26ZM28.3 29.2V34.75H37V29.2Z" fill="#fff" fill-rule="evenodd"/><rect x="23.6" y="38" width="18" height="2.8" fill="#fff"/><path d="M11.5 27.5L20.5 36.5M20.5 27.5L11.5 36.5" stroke="#fff" stroke-width="2.8"/></svg>
<div class="r" style="left:2546px;top:1087px;width:52px;height:46px;background:#c4544b;border-radius:6px;box-sizing:border-box;border:2px solid #ba4a42;"></div>
<svg class="r" style="left:2546px;top:1087px;" width="52" height="46" viewBox="0 0 52 46"><path d="M19.9 11.9H23.1V18.6H28.8V11.9H32.1V23H19.9Z" fill="#fff"/><rect x="24.8" y="11" width="2.7" height="5.6" fill="#fff"/><rect x="22.8" y="22" width="6.1" height="17.6" fill="#fff"/><path d="M5 7.12L45 46.16L48.07 43.01L8.07 3.97Z" fill="#c4544b"/><path d="M11.9 13.85L37.0 38.4" stroke="#fff" stroke-width="2.5"/></svg>
<div class="r" style="left:2606px;top:1087px;width:52px;height:46px;background:#e0a971;border-radius:6px;box-sizing:border-box;border:2px solid #e0a160;"></div>
<svg class="r" style="left:2606px;top:1087px;" width="52" height="46" viewBox="0 0 52 46"><g transform="translate(8 6.3) scale(1.5)"><path d="M20.71,7.04C21.1,6.65 21.1,6 20.71,5.63L18.37,3.29C18,2.9 17.35,2.9 16.96,3.29L15.12,5.12L18.87,8.87M3,17.25V21H6.75L17.81,9.93L14.06,6.18L3,17.25Z" fill="#fff"/></g></svg>
<div class="r" style="left:2666px;top:1087px;width:52px;height:46px;background:#c4544b;border-radius:6px;box-sizing:border-box;border:2px solid #ba4a42;"></div>
<svg class="r" style="left:2666px;top:1087px;" width="52" height="46" viewBox="0 0 52 46"><g transform="translate(8 6.3) scale(1.5)"><path d="M9,3V4H4V6H5V19A2,2 0 0,0 7,21H17A2,2 0 0,0 19,19V6H20V4H15V3H9M7,6H17V19H7V6M9,8V17H11V8H9M13,8V17H15V8H13Z" fill="#fff"/></g></svg>
<div class="r" style="left:22px;top:1223px;width:2712px;height:2px;background:#28272a;"></div>
<div class="r" style="left:22px;top:1225px;width:2712px;height:152px;background:#0e200d;"></div>
<div class="r" style="left:38px;top:1250px;width:24px;height:24px;background:#000;border-radius:4px;box-sizing:border-box;border:1px solid #3b3b3b;"></div>
<svg class="r" style="left:97px;top:1249px;" width="34" height="32" viewBox="0 0 34 32"><rect x="0" y="0" width="34" height="32" rx="4" fill="#d0d0d0"/><path d="M5 10.2H12V5.1H22V10.2H28.8V25H5Z" fill="#0e200d"/><rect x="8.7" y="19.9" width="3.4" height="5.2" fill="#d0d0d0"/><rect x="15.2" y="19.9" width="3.6" height="5.2" fill="#d0d0d0"/><rect x="21.9" y="19.9" width="3.6" height="5.2" fill="#d0d0d0"/></svg>
<div class="t" style="left:140px;top:1246px;font-size:28px;line-height:40px;color:#5b9bd5;transform:scaleY(1.045);transform-origin:0 29px;">Ethernet5/1</div>
<div class="r" style="left:354px;top:1245px;width:90px;height:36px;background:#5fa55a;border-radius:6px;"></div>
<div class="t" style="left:354px;top:1245px;width:90px;text-align:center;font-size:22px;line-height:36px;font-weight:bold;color:#fff">Active</div>
<div class="r" style="left:479px;top:1262px;width:21px;height:2px;background:#d6d6d6;"></div>
<svg class="r" style="left:0;top:0;transform:translate(580.3px,1244.1px)" width="40.8" height="40.8" viewBox="0 0 24 24"><path d="M9,20.42L2.79,14.21L5.62,11.38L9,14.77L18.88,4.88L21.71,7.71L9,20.42Z" fill="#6ea56a"/></svg>
<div class="t" style="left:721px;top:1242px;font-size:28px;line-height:40px;color:#d6d6d6;letter-spacing:-0.5px;transform:scaleY(1.045);transform-origin:0 29px;">QSFP28</div>
<div class="t" style="left:721px;top:1282px;font-size:28px;line-height:40px;color:#d6d6d6;letter-spacing:-1.0px;transform:scaleY(1.045);transform-origin:0 29px;">(100GE)</div>
<div class="r" style="left:905px;top:1262px;width:21px;height:2px;background:#d6d6d6;"></div>
<div class="r" style="left:1025px;top:1262px;width:21px;height:2px;background:#d6d6d6;"></div>
<div class="r" style="left:1114px;top:1262px;width:21px;height:2px;background:#d6d6d6;"></div>
<div class="r" style="left:1209px;top:1262px;width:21px;height:2px;background:#d6d6d6;"></div>
<div class="r" style="left:1316px;top:1262px;width:21px;height:2px;background:#d6d6d6;"></div>
<div class="t" style="left:1500px;top:1242px;font-size:28px;line-height:40px;color:#5b9bd5;letter-spacing:0.3px;transform:scaleY(1.045);transform-origin:0 29px;">#17199f5c-8385-</div>
<div class="t" style="left:1500px;top:1282px;font-size:28px;line-height:40px;color:#5b9bd5;transform:scaleY(1.045);transform-origin:0 29px;">4114-a0d7-</div>
<div class="t" style="left:1500px;top:1322px;font-size:28px;line-height:40px;color:#5b9bd5;transform:scaleY(1.045);transform-origin:0 29px;">15c4cb37f324</div>
<div class="t" style="left:1762px;top:1245px;font-size:28px;line-height:40px;color:#5b9bd5;transform:scaleY(1.045);transform-origin:0 29px;">lhr01-leaf-03</div>
<svg class="r" style="left:0;top:0;transform:translate(1930.1px,1246px)" width="36" height="36" viewBox="0 0 24 24"><path d="M8.59,16.58L13.17,12L8.59,7.41L10,6L16,12L10,18L8.59,16.58Z" fill="#cccccc"/></svg>
<div class="t" style="left:1977px;top:1245px;font-size:28px;line-height:40px;color:#5b9bd5;letter-spacing:-0.2px;transform:scaleY(1.045);transform-origin:0 29px;">Ethernet1</div>
<div class="t" style="left:2131px;top:1242px;font-size:28px;line-height:40px;color:#5b9bd5;transform:scaleY(1.045);transform-origin:0 29px;">10.6.192.12/32</div>
<div class="r" style="left:2367px;top:1241px;width:52px;height:46px;background:#6dad60;border-radius:6px;box-sizing:border-box;border:2px solid #62a653;"></div>
<svg class="r" style="left:2367px;top:1241px;" width="52" height="46" viewBox="0 0 52 46"><g transform="translate(8 6.3) scale(1.5)"><path d="M20 14H14V20H10V14H4V10H10V4H14V10H20V14Z" fill="#fff"/></g></svg>
<div class="r" style="left:2427px;top:1241px;width:52px;height:46px;background:#3d75b2;border-radius:6px;box-sizing:border-box;border:2px solid #3a6ca5;"></div>
<svg class="r" style="left:2427px;top:1241px;" width="52" height="46" viewBox="0 0 52 46"><path d="M32.5 13.95H16.74A5.2 5.2 0 0 0 16.74 24.35H32.98A5.2 5.2 0 0 1 32.98 34.75H17.5" fill="none" stroke="#fff" stroke-width="3"/><circle cx="35.4" cy="13.95" r="2.9" fill="none" stroke="#fff" stroke-width="3.1"/><circle cx="14.46" cy="34.75" r="2.9" fill="none" stroke="#fff" stroke-width="3.1"/><circle cx="24.86" cy="24.35" r="4.3" fill="#fff"/></svg>
<div class="r" style="left:2487px;top:1241px;width:52px;height:46px;background:#e0a971;border-radius:6px;box-sizing:border-box;border:2px solid #e0a160;"></div>
<svg class="r" style="left:2487px;top:1241px;" width="52" height="46" viewBox="0 0 52 46"><path d="M12 7.9H22.8A2.1 2.1 0 0 1 24.9 10V20H9.9V10A2.1 2.1 0 0 1 12 7.9ZM13.2 11.2V16.5H22.1V11.2Z" fill="#fff" fill-rule="evenodd"/><rect x="8.4" y="20" width="18" height="2.8" fill="#fff"/><path d="M27.2 26H38A2.1 2.1 0 0 1 40.1 28.1V38H25.1V28.1A2.1 2.1 0 0 1 27.2 26ZM28.3 29.2V34.75H37V29.2Z" fill="#fff" fill-rule="evenodd"/><rect x="23.6" y="38" width="18" height="2.8" fill="#fff"/><path d="M11.5 27.5L20.5 36.5M20.5 27.5L11.5 36.5" stroke="#fff" stroke-width="2.8"/></svg>
<div class="r" style="left:2546px;top:1241px;width:52px;height:46px;background:#c4544b;border-radius:6px;box-sizing:border-box;border:2px solid #ba4a42;"></div>
<svg class="r" style="left:2546px;top:1241px;" width="52" height="46" viewBox="0 0 52 46"><path d="M19.9 11.9H23.1V18.6H28.8V11.9H32.1V23H19.9Z" fill="#fff"/><rect x="24.8" y="11" width="2.7" height="5.6" fill="#fff"/><rect x="22.8" y="22" width="6.1" height="17.6" fill="#fff"/><path d="M5 7.12L45 46.16L48.07 43.01L8.07 3.97Z" fill="#c4544b"/><path d="M11.9 13.85L37.0 38.4" stroke="#fff" stroke-width="2.5"/></svg>
<div class="r" style="left:2606px;top:1241px;width:52px;height:46px;background:#e0a971;border-radius:6px;box-sizing:border-box;border:2px solid #e0a160;"></div>
<svg class="r" style="left:2606px;top:1241px;" width="52" height="46" viewBox="0 0 52 46"><g transform="translate(8 6.3) scale(1.5)"><path d="M20.71,7.04C21.1,6.65 21.1,6 20.71,5.63L18.37,3.29C18,2.9 17.35,2.9 16.96,3.29L15.12,5.12L18.87,8.87M3,17.25V21H6.75L17.81,9.93L14.06,6.18L3,17.25Z" fill="#fff"/></g></svg>
<div class="r" style="left:2666px;top:1241px;width:52px;height:46px;background:#c4544b;border-radius:6px;box-sizing:border-box;border:2px solid #ba4a42;"></div>
<svg class="r" style="left:2666px;top:1241px;" width="52" height="46" viewBox="0 0 52 46"><g transform="translate(8 6.3) scale(1.5)"><path d="M9,3V4H4V6H5V19A2,2 0 0,0 7,21H17A2,2 0 0,0 19,19V6H20V4H15V3H9M7,6H17V19H7V6M9,8V17H11V8H9M13,8V17H15V8H13Z" fill="#fff"/></g></svg>
<div class="r" style="left:22px;top:1377px;width:2712px;height:2px;background:#28272a;"></div>
<div class="r" style="left:22px;top:1379px;width:2712px;height:152px;background:#0e200d;"></div>
<div class="r" style="left:38px;top:1404px;width:24px;height:24px;background:#000;border-radius:4px;box-sizing:border-box;border:1px solid #3b3b3b;"></div>
<svg class="r" style="left:97px;top:1403px;" width="34" height="32" viewBox="0 0 34 32"><rect x="0" y="0" width="34" height="32" rx="4" fill="#d0d0d0"/><path d="M5 10.2H12V5.1H22V10.2H28.8V25H5Z" fill="#0e200d"/><rect x="8.7" y="19.9" width="3.4" height="5.2" fill="#d0d0d0"/><rect x="15.2" y="19.9" width="3.6" height="5.2" fill="#d0d0d0"/><rect x="21.9" y="19.9" width="3.6" height="5.2" fill="#d0d0d0"/></svg>
<div class="t" style="left:140px;top:1400px;font-size:28px;line-height:40px;color:#5b9bd5;transform:scaleY(1.045);transform-origin:0 29px;">Ethernet6/1</div>
<div class="r" style="left:354px;top:1399px;width:90px;height:36px;background:#5fa55a;border-radius:6px;"></div>
<div class="t" style="left:354px;top:1399px;width:90px;text-align:center;font-size:22px;line-height:36px;font-weight:bold;color:#fff">Active</div>
<div class="r" style="left:479px;top:1416px;width:21px;height:2px;background:#d6d6d6;"></div>
<svg class="r" style="left:0;top:0;transform:translate(580.3px,1398.1px)" width="40.8" height="40.8" viewBox="0 0 24 24"><path d="M9,20.42L2.79,14.21L5.62,11.38L9,14.77L18.88,4.88L21.71,7.71L9,20.42Z" fill="#6ea56a"/></svg>
<div class="t" style="left:721px;top:1396px;font-size:28px;line-height:40px;color:#d6d6d6;letter-spacing:-0.5px;transform:scaleY(1.045);transform-origin:0 29px;">QSFP28</div>
<div class="t" style="left:721px;top:1436px;font-size:28px;line-height:40px;color:#d6d6d6;letter-spacing:-1.0px;transform:scaleY(1.045);transform-origin:0 29px;">(100GE)</div>
<div class="r" style="left:905px;top:1416px;width:21px;height:2px;background:#d6d6d6;"></div>
<div class="r" style="left:1025px;top:1416px;width:21px;height:2px;background:#d6d6d6;"></div>
<div class="r" style="left:1114px;top:1416px;width:21px;height:2px;background:#d6d6d6;"></div>
<div class="r" style="left:1209px;top:1416px;width:21px;height:2px;background:#d6d6d6;"></div>
<div class="r" style="left:1316px;top:1416px;width:21px;height:2px;background:#d6d6d6;"></div>
<div class="t" style="left:1500px;top:1396px;font-size:28px;line-height:40px;color:#5b9bd5;letter-spacing:0.3px;transform:scaleY(1.045);transform-origin:0 29px;">#bfed018e-6ad1-</div>
<div class="t" style="left:1500px;top:1436px;font-size:28px;line-height:40px;color:#5b9bd5;transform:scaleY(1.045);transform-origin:0 29px;">4a02-a702-</div>
<div class="t" style="left:1500px;top:1476px;font-size:28px;line-height:40px;color:#5b9bd5;transform:scaleY(1.045);transform-origin:0 29px;">10698e8d20f1</div>
<div class="t" style="left:1762px;top:1399px;font-size:28px;line-height:40px;color:#5b9bd5;transform:scaleY(1.045);transform-origin:0 29px;">lhr01-leaf-04</div>
<svg class="r" style="left:0;top:0;transform:translate(1930.1px,1400px)" width="36" height="36" viewBox="0 0 24 24"><path d="M8.59,16.58L13.17,12L8.59,7.41L10,6L16,12L10,18L8.59,16.58Z" fill="#cccccc"/></svg>
<div class="t" style="left:1977px;top:1399px;font-size:28px;line-height:40px;color:#5b9bd5;letter-spacing:-0.2px;transform:scaleY(1.045);transform-origin:0 29px;">Ethernet1</div>
<div class="t" style="left:2131px;top:1396px;font-size:28px;line-height:40px;color:#5b9bd5;transform:scaleY(1.045);transform-origin:0 29px;">10.6.192.16/32</div>
<div class="r" style="left:2367px;top:1395px;width:52px;height:46px;background:#6dad60;border-radius:6px;box-sizing:border-box;border:2px solid #62a653;"></div>
<svg class="r" style="left:2367px;top:1395px;" width="52" height="46" viewBox="0 0 52 46"><g transform="translate(8 6.3) scale(1.5)"><path d="M20 14H14V20H10V14H4V10H10V4H14V10H20V14Z" fill="#fff"/></g></svg>
<div class="r" style="left:2427px;top:1395px;width:52px;height:46px;background:#3d75b2;border-radius:6px;box-sizing:border-box;border:2px solid #3a6ca5;"></div>
<svg class="r" style="left:2427px;top:1395px;" width="52" height="46" viewBox="0 0 52 46"><path d="M32.5 13.95H16.74A5.2 5.2 0 0 0 16.74 24.35H32.98A5.2 5.2 0 0 1 32.98 34.75H17.5" fill="none" stroke="#fff" stroke-width="3"/><circle cx="35.4" cy="13.95" r="2.9" fill="none" stroke="#fff" stroke-width="3.1"/><circle cx="14.46" cy="34.75" r="2.9" fill="none" stroke="#fff" stroke-width="3.1"/><circle cx="24.86" cy="24.35" r="4.3" fill="#fff"/></svg>
<div class="r" style="left:2487px;top:1395px;width:52px;height:46px;background:#e0a971;border-radius:6px;box-sizing:border-box;border:2px solid #e0a160;"></div>
<svg class="r" style="left:2487px;top:1395px;" width="52" height="46" viewBox="0 0 52 46"><path d="M12 7.9H22.8A2.1 2.1 0 0 1 24.9 10V20H9.9V10A2.1 2.1 0 0 1 12 7.9ZM13.2 11.2V16.5H22.1V11.2Z" fill="#fff" fill-rule="evenodd"/><rect x="8.4" y="20" width="18" height="2.8" fill="#fff"/><path d="M27.2 26H38A2.1 2.1 0 0 1 40.1 28.1V38H25.1V28.1A2.1 2.1 0 0 1 27.2 26ZM28.3 29.2V34.75H37V29.2Z" fill="#fff" fill-rule="evenodd"/><rect x="23.6" y="38" width="18" height="2.8" fill="#fff"/><path d="M11.5 27.5L20.5 36.5M20.5 27.5L11.5 36.5" stroke="#fff" stroke-width="2.8"/></svg>
<div class="r" style="left:2546px;top:1395px;width:52px;height:46px;background:#c4544b;border-radius:6px;box-sizing:border-box;border:2px solid #ba4a42;"></div>
<svg class="r" style="left:2546px;top:1395px;" width="52" height="46" viewBox="0 0 52 46"><path d="M19.9 11.9H23.1V18.6H28.8V11.9H32.1V23H19.9Z" fill="#fff"/><rect x="24.8" y="11" width="2.7" height="5.6" fill="#fff"/><rect x="22.8" y="22" width="6.1" height="17.6" fill="#fff"/><path d="M5 7.12L45 46.16L48.07 43.01L8.07 3.97Z" fill="#c4544b"/><path d="M11.9 13.85L37.0 38.4" stroke="#fff" stroke-width="2.5"/></svg>
<div class="r" style="left:2606px;top:1395px;width:52px;height:46px;background:#e0a971;border-radius:6px;box-sizing:border-box;border:2px solid #e0a160;"></div>
<svg class="r" style="left:2606px;top:1395px;" width="52" height="46" viewBox="0 0 52 46"><g transform="translate(8 6.3) scale(1.5)"><path d="M20.71,7.04C21.1,6.65 21.1,6 20.71,5.63L18.37,3.29C18,2.9 17.35,2.9 16.96,3.29L15.12,5.12L18.87,8.87M3,17.25V21H6.75L17.81,9.93L14.06,6.18L3,17.25Z" fill="#fff"/></g></svg>
<div class="r" style="left:2666px;top:1395px;width:52px;height:46px;background:#c4544b;border-radius:6px;box-sizing:border-box;border:2px solid #ba4a42;"></div>
<svg class="r" style="left:2666px;top:1395px;" width="52" height="46" viewBox="0 0 52 46"><g transform="translate(8 6.3) scale(1.5)"><path d="M9,3V4H4V6H5V19A2,2 0 0,0 7,21H17A2,2 0 0,0 19,19V6H20V4H15V3H9M7,6H17V19H7V6M9,8V17H11V8H9M13,8V17H15V8H13Z" fill="#fff"/></g></svg>
<div class="r" style="left:22px;top:1531px;width:2712px;height:2px;background:#28272a;"></div>
<div class="r" style="left:22px;top:1533px;width:2712px;height:152px;background:#0e200d;"></div>
<div class="r" style="left:38px;top:1558px;width:24px;height:24px;background:#000;border-radius:4px;box-sizing:border-box;border:1px solid #3b3b3b;"></div>
<svg class="r" style="left:97px;top:1557px;" width="34" height="32" viewBox="0 0 34 32"><rect x="0" y="0" width="34" height="32" rx="4" fill="#d0d0d0"/><path d="M5 10.2H12V5.1H22V10.2H28.8V25H5Z" fill="#0e200d"/><rect x="8.7" y="19.9" width="3.4" height="5.2" fill="#d0d0d0"/><rect x="15.2" y="19.9" width="3.6" height="5.2" fill="#d0d0d0"/><rect x="21.9" y="19.9" width="3.6" height="5.2" fill="#d0d0d0"/></svg>
<div class="t" style="left:140px;top:1554px;font-size:28px;line-height:40px;color:#5b9bd5;transform:scaleY(1.045);transform-origin:0 29px;">Ethernet7/1</div>
<div class="r" style="left:354px;top:1553px;width:90px;height:36px;background:#5fa55a;border-radius:6px;"></div>
<div class="t" style="left:354px;top:1553px;width:90px;text-align:center;font-size:22px;line-height:36px;font-weight:bold;color:#fff">Active</div>
<div class="r" style="left:479px;top:1570px;width:21px;height:2px;background:#d6d6d6;"></div>
<svg class="r" style="left:0;top:0;transform:translate(580.3px,1552.1px)" width="40.8" height="40.8" viewBox="0 0 24 24"><path d="M9,20.42L2.79,14.21L5.62,11.38L9,14.77L18.88,4.88L21.71,7.71L9,20.42Z" fill="#6ea56a"/></svg>
<div class="t" style="left:721px;top:1550px;font-size:28px;line-height:40px;color:#d6d6d6;letter-spacing:-0.5px;transform:scaleY(1.045);transform-origin:0 29px;">QSFP28</div>
<div class="t" style="left:721px;top:1590px;font-size:28px;line-height:40px;color:#d6d6d6;letter-spacing:-1.0px;transform:scaleY(1.045);transform-origin:0 29px;">(100GE)</div>
<div class="r" style="left:905px;top:1570px;width:21px;height:2px;background:#d6d6d6;"></div>
<div class="r" style="left:1025px;top:1570px;width:21px;height:2px;background:#d6d6d6;"></div>
<div class="r" style="left:1114px;top:1570px;width:21px;height:2px;background:#d6d6d6;"></div>
<div class="r" style="left:1209px;top:1570px;width:21px;height:2px;background:#d6d6d6;"></div>
<div class="r" style="left:1316px;top:1570px;width:21px;height:2px;background:#d6d6d6;"></div>
<div class="t" style="left:1500px;top:1550px;font-size:28px;line-height:40px;color:#5b9bd5;letter-spacing:0.3px;transform:scaleY(1.045);transform-origin:0 29px;">#def9d547-8409-</div>
<div class="t" style="left:1500px;top:1590px;font-size:28px;line-height:40px;color:#5b9bd5;transform:scaleY(1.045);transform-origin:0 29px;">43a1-a38f-</div>
<div class="t" style="left:1500px;top:1630px;font-size:28px;line-height:40px;color:#5b9bd5;transform:scaleY(1.045);transform-origin:0 29px;">c8459668bcbe</div>
<div class="t" style="left:1762px;top:1553px;font-size:28px;line-height:40px;color:#5b9bd5;transform:scaleY(1.045);transform-origin:0 29px;">lhr01-leaf-05</div>
<svg class="r" style="left:0;top:0;transform:translate(1930.1px,1554px)" width="36" height="36" viewBox="0 0 24 24"><path d="M8.59,16.58L13.17,12L8.59,7.41L10,6L16,12L10,18L8.59,16.58Z" fill="#cccccc"/></svg>
<div class="t" style="left:1977px;top:1553px;font-size:28px;line-height:40px;color:#5b9bd5;letter-spacing:-0.2px;transform:scaleY(1.045);transform-origin:0 29px;">Ethernet1</div>
<div class="t" style="left:2131px;top:1550px;font-size:28px;line-height:40px;color:#5b9bd5;transform:scaleY(1.045);transform-origin:0 29px;">10.6.192.20/32</div>
<div class="r" style="left:2367px;top:1549px;width:52px;height:46px;background:#6dad60;border-radius:6px;box-sizing:border-box;border:2px solid #62a653;"></div>
<svg class="r" style="left:2367px;top:1549px;" width="52" height="46" viewBox="0 0 52 46"><g transform="translate(8 6.3) scale(1.5)"><path d="M20 14H14V20H10V14H4V10H10V4H14V10H20V14Z" fill="#fff"/></g></svg>
<div class="r" style="left:2427px;top:1549px;width:52px;height:46px;background:#3d75b2;border-radius:6px;box-sizing:border-box;border:2px solid #3a6ca5;"></div>
<svg class="r" style="left:2427px;top:1549px;" width="52" height="46" viewBox="0 0 52 46"><path d="M32.5 13.95H16.74A5.2 5.2 0 0 0 16.74 24.35H32.98A5.2 5.2 0 0 1 32.98 34.75H17.5" fill="none" stroke="#fff" stroke-width="3"/><circle cx="35.4" cy="13.95" r="2.9" fill="none" stroke="#fff" stroke-width="3.1"/><circle cx="14.46" cy="34.75" r="2.9" fill="none" stroke="#fff" stroke-width="3.1"/><circle cx="24.86" cy="24.35" r="4.3" fill="#fff"/></svg>
<div class="r" style="left:2487px;top:1549px;width:52px;height:46px;background:#e0a971;border-radius:6px;box-sizing:border-box;border:2px solid #e0a160;"></div>
<svg class="r" style="left:2487px;top:1549px;" width="52" height="46" viewBox="0 0 52 46"><path d="M12 7.9H22.8A2.1 2.1 0 0 1 24.9 10V20H9.9V10A2.1 2.1 0 0 1 12 7.9ZM13.2 11.2V16.5H22.1V11.2Z" fill="#fff" fill-rule="evenodd"/><rect x="8.4" y="20" width="18" height="2.8" fill="#fff"/><path d="M27.2 26H38A2.1 2.1 0 0 1 40.1 28.1V38H25.1V28.1A2.1 2.1 0 0 1 27.2 26ZM28.3 29.2V34.75H37V29.2Z" fill="#fff" fill-rule="evenodd"/><rect x="23.6" y="38" width="18" height="2.8" fill="#fff"/><path d="M11.5 27.5L20.5 36.5M20.5 27.5L11.5 36.5" stroke="#fff" stroke-width="2.8"/></svg>
<div class="r" style="left:2546px;top:1549px;width:52px;height:46px;background:#c4544b;border-radius:6px;box-sizing:border-box;border:2px solid #ba4a42;"></div>
<svg class="r" style="left:2546px;top:1549px;" width="52" height="46" viewBox="0 0 52 46"><path d="M19.9 11.9H23.1V18.6H28.8V11.9H32.1V23H19.9Z" fill="#fff"/><rect x="24.8" y="11" width="2.7" height="5.6" fill="#fff"/><rect x="22.8" y="22" width="6.1" height="17.6" fill="#fff"/><path d="M5 7.12L45 46.16L48.07 43.01L8.07 3.97Z" fill="#c4544b"/><path d="M11.9 13.85L37.0 38.4" stroke="#fff" stroke-width="2.5"/></svg>
<div class="r" style="left:2606px;top:1549px;width:52px;height:46px;background:#e0a971;border-radius:6px;box-sizing:border-box;border:2px solid #e0a160;"></div>
<svg class="r" style="left:2606px;top:1549px;" width="52" height="46" viewBox="0 0 52 46"><g transform="translate(8 6.3) scale(1.5)"><path d="M20.71,7.04C21.1,6.65 21.1,6 20.71,5.63L18.37,3.29C18,2.9 17.35,2.9 16.96,3.29L15.12,5.12L18.87,8.87M3,17.25V21H6.75L17.81,9.93L14.06,6.18L3,17.25Z" fill="#fff"/></g></svg>
<div class="r" style="left:2666px;top:1549px;width:52px;height:46px;background:#c4544b;border-radius:6px;box-sizing:border-box;border:2px solid #ba4a42;"></div>
<svg class="r" style="left:2666px;top:1549px;" width="52" height="46" viewBox="0 0 52 46"><g transform="translate(8 6.3) scale(1.5)"><path d="M9,3V4H4V6H5V19A2,2 0 0,0 7,21H17A2,2 0 0,0 19,19V6H20V4H15V3H9M7,6H17V19H7V6M9,8V17H11V8H9M13,8V17H15V8H13Z" fill="#fff"/></g></svg>
</div></body></html>
